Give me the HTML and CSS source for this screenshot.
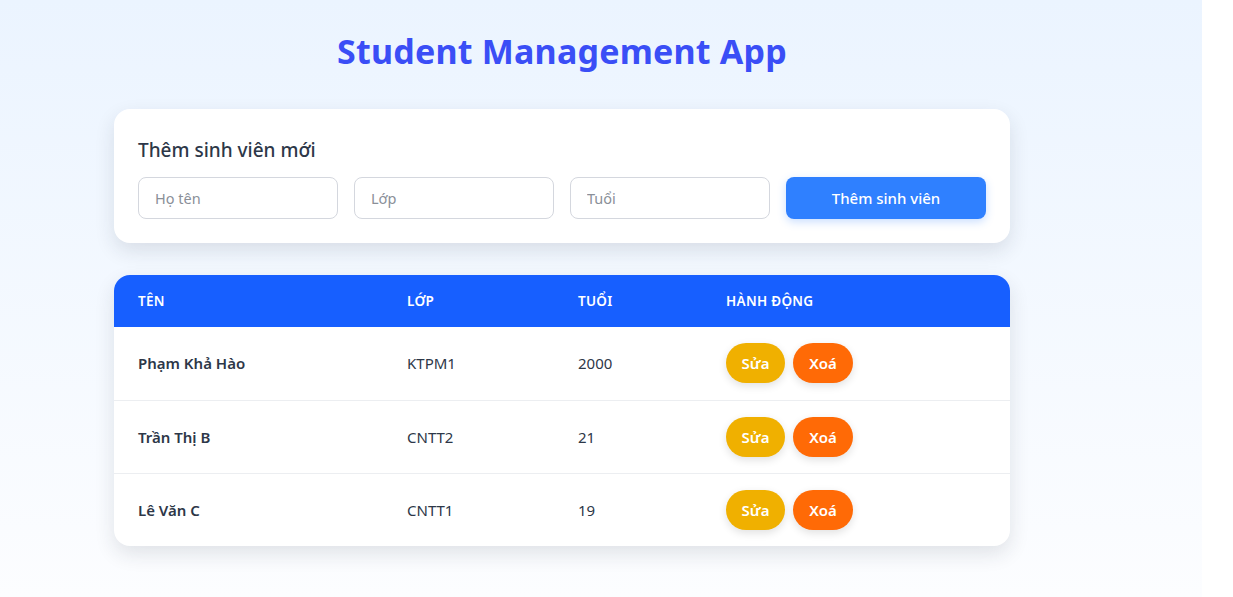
FILE: index.html
```html
<!DOCTYPE html>
<html lang="vi">
<head>
<meta charset="utf-8">
<title>Student Management App</title>
<link rel="stylesheet" href="styles.css">
</head>
<body>
<div class="page">
  <div class="container">
    <h1 class="title">Student Management App</h1>
    <section class="card form-card">
      <h2 class="form-title">Thêm sinh viên mới</h2>
      <div class="form-row">
        <input class="field" type="text" placeholder="Họ tên">
        <input class="field" type="text" placeholder="Lớp">
        <input class="field" type="text" placeholder="Tuổi">
        <button class="btn-add" type="button">Thêm sinh viên</button>
      </div>
    </section>
    <section class="card table-card">
      <table class="table">
        <thead>
          <tr>
            <th class="c-name">Tên</th>
            <th class="c-class">Lớp</th>
            <th class="c-age">Tuổi</th>
            <th>Hành động</th>
          </tr>
        </thead>
        <tbody>
          <tr>
            <td class="name">Phạm Khả Hào</td>
            <td>KTPM1</td>
            <td>2000</td>
            <td><div class="actions"><button class="btn btn-edit">Sửa</button><button class="btn btn-del">Xoá</button></div></td>
          </tr>
          <tr>
            <td class="name">Trần Thị B</td>
            <td>CNTT2</td>
            <td>21</td>
            <td><div class="actions"><button class="btn btn-edit">Sửa</button><button class="btn btn-del">Xoá</button></div></td>
          </tr>
          <tr>
            <td class="name">Lê Văn C</td>
            <td>CNTT1</td>
            <td>19</td>
            <td><div class="actions"><button class="btn btn-edit">Sửa</button><button class="btn btn-del">Xoá</button></div></td>
          </tr>
        </tbody>
      </table>
    </section>
  </div>
</div>
</body>
</html>
```
FILE: styles.css
```css
* { box-sizing: border-box; }
html, body { margin: 0; padding: 0; background: #ffffff; }
body {
  font-family: "Noto Sans", "Open Sans", sans-serif;
  color: #2d3748;
}
.page {
  width: 1202px;
  min-height: 597px;
  background: linear-gradient(180deg, #ebf4ff 0%, #fcfdff 100%);
  padding: 26px 0 40px 114px;
}
.container { width: 896px; }
.title {
  margin: 0 0 33px;
  text-align: center;
  font-size: 34px;
  font-weight: 700;
  color: #3a4ef6;
  line-height: 50px;
  letter-spacing: 0.2px;
}
.card {
  background: #fff;
  border-radius: 16px;
  box-shadow: 0 8px 20px rgba(30, 41, 59, 0.12);
}
.form-card { padding: 28px 24px 24px; }
.form-title {
  margin: 0 0 14px;
  font-size: 19px;
  font-weight: 500;
  line-height: 26px;
  color: #2d3748;
}
.form-row { display: flex; gap: 16px; }
.field {
  width: 200px;
  height: 42px;
  border: 1px solid #d4d7de;
  border-radius: 8px;
  padding: 0 16px;
  font-family: inherit;
  font-size: 14.5px;
  color: #2d3748;
  background: #fff;
  outline: none;
}
.field::placeholder { color: #8a8f98; }
.btn-add {
  width: 200px;
  height: 42px;
  border: 0;
  border-radius: 8px;
  background: #2f80ff;
  color: #fff;
  font-family: inherit;
  font-size: 15px;
  font-weight: 500;
  box-shadow: 0 3px 8px rgba(47, 128, 255, 0.25);
}
.table-card { margin-top: 32px; overflow: hidden; }
.table { width: 100%; border-collapse: collapse; }
.table th {
  background: #175fff;
  color: #fff;
  text-align: left;
  font-size: 13.5px;
  font-weight: 600;
  text-transform: uppercase;
  letter-spacing: 0.3px;
  height: 52px;
  padding: 0 0 0 24px;
}
.c-name { width: 269px; }
.c-class { width: 171px; }
.c-age { width: 148px; }
.table td {
  height: 73px;
  padding: 0 0 0 24px;
  font-size: 15px;
  color: #2d3748;
  border-bottom: 1px solid #eceef1;
}
.table tbody tr:last-child td { border-bottom: 0; }
.table td.name { font-weight: 600; }
.actions { display: flex; gap: 8px; }
.btn {
  height: 40px;
  border: 0;
  border-radius: 20px;
  color: #fff;
  font-family: inherit;
  font-size: 15px;
  font-weight: 600;
  padding: 0;
  box-shadow: 0 3px 8px rgba(0, 0, 0, 0.12);
}
.btn-edit { width: 59px; background: #f0b000; }
.btn-del { width: 60px; background: #ff6a06; }
```
